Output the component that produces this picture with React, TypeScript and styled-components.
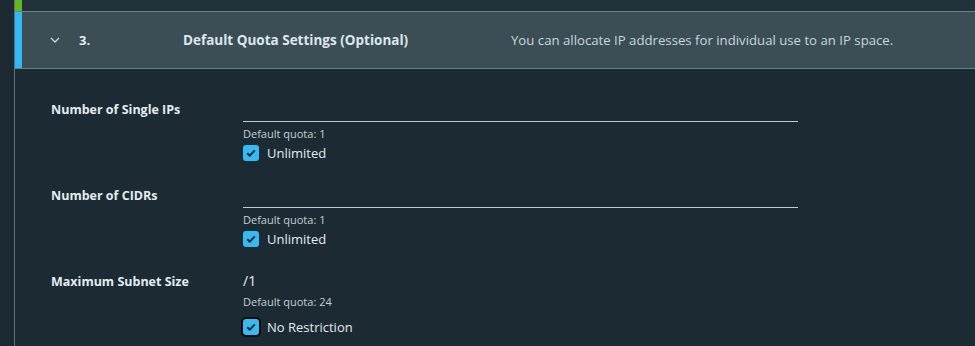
import React from 'react';
import styled, { createGlobalStyle } from 'styled-components';

const GlobalStyle = createGlobalStyle`
  html, body {
    margin: 0;
    padding: 0;
    background: #1b2a32;
  }
  body {
    font-family: 'Open Sans', 'Lato', sans-serif;
    color: #e6edf1;
  }
`;

const Page = styled.div`
  display: flex;
  width: 975px;
  height: 346px;
  overflow: hidden;
`;

const Gutter = styled.div`
  width: 14px;
  background: #1b2a32;
  border-right: 1px solid #5e6f77;
`;

const Main = styled.div`
  flex: 1;
  display: flex;
  flex-direction: column;
  background: #1c2b33;
`;

const TopStrip = styled.div`
  height: 11px;
  background: #21323b;
  display: flex;
`;

const StatusBar = styled.div<{ $color: string }>`
  width: 7px;
  align-self: stretch;
  background: ${p => p.$color};
`;

const Header = styled.div`
  height: 56px;
  display: flex;
  align-items: center;
  background: #3b4e56;
  border-top: 1px solid #6c7f87;
  border-bottom: 1px solid #6c7f87;
`;

const Chevron = styled.svg`
  width: 12px;
  height: 12px;
  margin-left: 27px;
  margin-right: 18px;
  color: #c9d6dc;
`;

const StepNum = styled.span`
  width: 104px;
  font-weight: 700;
  font-size: 13px;
  color: #e4ecf0;
`;

const Title = styled.span`
  width: 328px;
  font-weight: 700;
  font-size: 13.5px;
  color: #dde7ec;
`;

const Desc = styled.span`
  font-size: 13.2px;
  color: #c8d6dd;
`;

const Body = styled.div`
  padding: 29px 0 0 36px;
  display: flex;
  flex-direction: column;
  gap: 22px;
`;

const Row = styled.div`
  display: grid;
  grid-template-columns: 192px 555px;
`;

const Label = styled.div`
  font-weight: 700;
  font-size: 12.5px;
  color: #e4ecf0;
  height: 22px;
  display: flex;
  align-items: center;
`;

const Field = styled.div`
  display: flex;
  flex-direction: column;
`;

const Input = styled.div`
  height: 23px;
  border-bottom: 1px solid #c2cdd2;
`;

const Prefix = styled.div`
  height: 20px;
  display: flex;
  align-items: center;
  font-size: 14px;
  color: #e6edf1;
`;

const Helper = styled.div`
  font-size: 11px;
  line-height: 14px;
  margin-top: 5px;
  color: #c3cfd5;
`;

const CheckRow = styled.label<{ $gap?: number }>`
  display: flex;
  align-items: center;
  gap: 8px;
  margin-top: ${p => p.$gap ?? 3}px;
  font-size: 13px;
  color: #e2eaee;
`;

const Box = styled.span<{ $focus?: boolean }>`
  width: 16px;
  height: 16px;
  border-radius: 3px;
  background: #35bbf3;
  display: flex;
  align-items: center;
  justify-content: center;
  box-shadow: ${p => (p.$focus ? '0 0 0 2px #04080a' : 'none')};
`;

const Check = ({ focus }: { focus?: boolean }) => (
  <Box $focus={focus}>
    <svg width="10" height="8" viewBox="0 0 10 8">
      <path d="M1.2 4.2 L3.8 6.6 L8.8 1.4" fill="none" stroke="#17242b" strokeWidth="2" />
    </svg>
  </Box>
);

export default function App() {
  return (
    <Page>
      <GlobalStyle />
      <Gutter />
      <Main>
        <TopStrip>
          <StatusBar $color="#62b821" />
        </TopStrip>
        <Header>
          <StatusBar $color="#30b9f6" />
          <Chevron viewBox="0 0 12 12">
            <path d="M2 4 L6 8 L10 4" fill="none" stroke="currentColor" strokeWidth="1.3" />
          </Chevron>
          <StepNum>3.</StepNum>
          <Title>Default Quota Settings (Optional)</Title>
          <Desc>You can allocate IP addresses for individual use to an IP space.</Desc>
        </Header>
        <Body>
          <Row>
            <Label>Number of Single IPs</Label>
            <Field>
              <Input />
              <Helper>Default quota: 1</Helper>
              <CheckRow>
                <Check />
                Unlimited
              </CheckRow>
            </Field>
          </Row>
          <Row>
            <Label>Number of CIDRs</Label>
            <Field>
              <Input />
              <Helper>Default quota: 1</Helper>
              <CheckRow>
                <Check />
                Unlimited
              </CheckRow>
            </Field>
          </Row>
          <Row>
            <Label>Maximum Subnet Size</Label>
            <Field>
              <Prefix>/1</Prefix>
              <Helper>Default quota: 24</Helper>
              <CheckRow $gap={9}>
                <Check focus />
                No Restriction
              </CheckRow>
            </Field>
          </Row>
        </Body>
      </Main>
    </Page>
  );
}
